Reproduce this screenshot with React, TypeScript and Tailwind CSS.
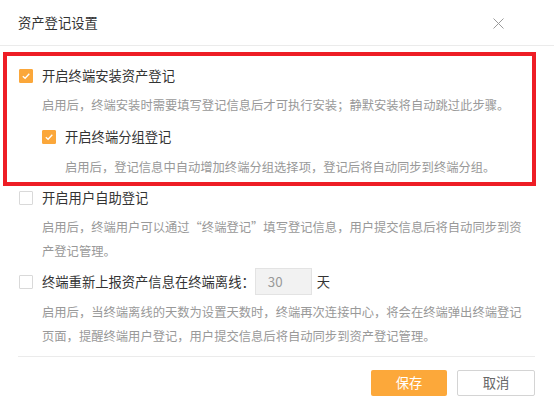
import { useState } from 'react'

const font = { fontFamily: '"Noto Sans CJK SC", "Noto Sans", sans-serif' }

function Check({ checked, onClick }: { checked: boolean; onClick: () => void }) {
  return (
    <button
      onClick={onClick}
      className={
        'w-[14px] h-[14px] shrink-0 flex items-center justify-center rounded-[1px] border ' +
        (checked ? 'bg-[#fba73a] border-[#fba73a]' : 'bg-white border-[#d9d9d9]')
      }
    >
      {checked && (
        <svg width="10" height="10" viewBox="0 0 10 10" fill="none">
          <path d="M1.8 5.2 L4.1 7.3 L8.3 2.8" stroke="#fff" strokeWidth="1.3" />
        </svg>
      )}
    </button>
  )
}

export default function App() {
  const [install, setInstall] = useState(true)
  const [group, setGroup] = useState(true)
  const [self, setSelf] = useState(false)
  const [offline, setOffline] = useState(false)

  return (
    <div className="w-[554px] h-[405px] bg-white text-[#333] overflow-hidden" style={font}>
      <div className="h-[46px] flex items-center justify-between pl-[18px] pr-[50px] border-b border-[#ebebeb]">
        <span className="text-[13.3px]">资产登记设置</span>
        <svg width="11" height="11" viewBox="0 0 11 11" className="mt-[1px]">
          <path d="M0.5 0.5 L10.5 10.5 M10.5 0.5 L0.5 10.5" stroke="#9a9a9a" strokeWidth="1" />
        </svg>
      </div>

      <div className="ml-[3px] mr-[18px] mt-[6px] border-4 border-[#ee1d25] pl-[12px] pt-[8px] pb-[3px]">
        <div className="h-6 flex items-center gap-[9px] text-[13.3px]">
          <Check checked={install} onClick={() => setInstall(!install)} />
          <span>开启终端安装资产登记</span>
        </div>
        <p className="mt-[5px] pl-[23px] text-[12.3px] leading-6 text-[#999]">
          启用后，终端安装时需要填写登记信息后才可执行安装；静默安装将自动跳过此步骤。
        </p>
        <div className="mt-[8px] pl-[23px] h-6 flex items-center gap-[9px] text-[13.3px]">
          <Check checked={group} onClick={() => setGroup(!group)} />
          <span>开启终端分组登记</span>
        </div>
        <p className="mt-[6px] pl-[46px] text-[12.3px] leading-6 text-[#999]">
          启用后，登记信息中自动增加终端分组选择项，登记后将自动同步到终端分组。
        </p>
      </div>

      <div className="pl-[19px]">
        <div className="h-6 flex items-center gap-[9px] text-[13.3px]">
          <Check checked={self} onClick={() => setSelf(!self)} />
          <span>开启用户自助登记</span>
        </div>
        <p className="mt-[5px] pl-[23px] w-[511px] text-[12.3px] leading-6 text-[#999]">
          启用后，终端用户可以通过“终端登记”填写登记信息，用户提交信息后将自动同步到资产登记管理。
        </p>
        <div className="mt-[5px] h-[27px] flex items-center text-[13.3px]">
          <Check checked={offline} onClick={() => setOffline(!offline)} />
          <span className="ml-[9px]">终端重新上报资产信息在终端离线：</span>
          <div className="w-[57px] h-[27px] bg-[#f2f2f2] border border-[#e3e3e3] flex items-center pl-[12px] text-[#999]">
            30
          </div>
          <span className="ml-[5px]">天</span>
        </div>
        <p className="mt-[5px] pl-[23px] w-[511px] text-[12.3px] leading-6 text-[#999]">
          启用后，当终端离线的天数为设置天数时，终端再次连接中心，将会在终端弹出终端登记页面，提醒终端用户登记，用户提交信息后将自动同步到资产登记管理。
        </p>
      </div>

      <div className="mt-[8px] ml-[18px] mr-[19px] border-t border-[#ebebeb] pt-[13px] flex justify-end gap-[10px]">
        <button className="w-[76px] h-[26px] bg-[#fca83a] text-white text-[13.3px] rounded-[2px]">保存</button>
        <button className="w-[78px] h-[26px] bg-white border border-[#d4d4d4] text-[#666] text-[13.3px] rounded-[2px]">
          取消
        </button>
      </div>
    </div>
  )
}
